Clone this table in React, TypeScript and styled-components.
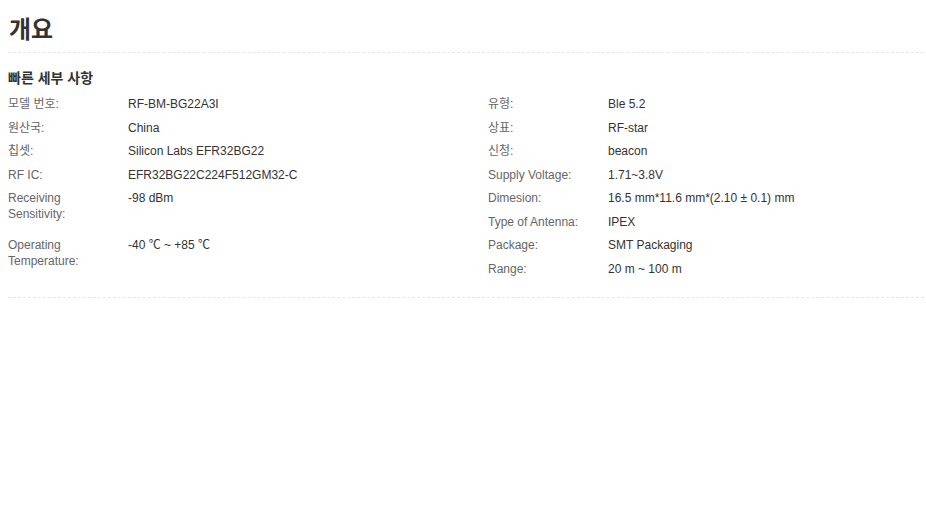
import styled, { createGlobalStyle } from "styled-components";

const GlobalStyle = createGlobalStyle`
  body {
    margin: 0;
    background: #fff;
    font-family: "Liberation Sans", Arial, "Noto Sans CJK KR", sans-serif;
    color: #333;
  }
`;

const left = [
  { label: "모델 번호:", value: "RF-BM-BG22A3I" },
  { label: "원산국:", value: "China" },
  { label: "칩셋:", value: "Silicon Labs EFR32BG22" },
  { label: "RF IC:", value: "EFR32BG22C224F512GM32-C" },
  { label: "Receiving Sensitivity:", value: "-98 dBm", tall: true },
  { label: "Operating Temperature:", value: "-40 ℃ ~ +85 ℃", tall: true },
];

const right = [
  { label: "유형:", value: "Ble 5.2" },
  { label: "상표:", value: "RF-star" },
  { label: "신청:", value: "beacon" },
  { label: "Supply Voltage:", value: "1.71~3.8V" },
  { label: "Dimesion:", value: "16.5 mm*11.6 mm*(2.10 ± 0.1) mm" },
  { label: "Type of Antenna:", value: "IPEX" },
  { label: "Package:", value: "SMT Packaging" },
  { label: "Range:", value: "20 m ~ 100 m" },
];

export default function App() {
  return (
    <>
      <GlobalStyle />
      <Page>
        <Title>개요</Title>
        <Section>
          <SubTitle>빠른 세부 사항</SubTitle>
          <Columns>
            <SpecList>
              {left.map((row) => (
                <Row key={row.label} $tall={row.tall}>
                  <Label>{row.label}</Label>
                  <Value>{row.value}</Value>
                </Row>
              ))}
            </SpecList>
            <SpecList>
              {right.map((row) => (
                <Row key={row.label}>
                  <Label>{row.label}</Label>
                  <Value>{row.value}</Value>
                </Row>
              ))}
            </SpecList>
          </Columns>
        </Section>
      </Page>
    </>
  );
}

const Page = styled.div`
  padding: 0 2px 0 8px;
`;

const Title = styled.h1`
  margin: 0;
  padding: 15px 0 7px 1px;
  font-size: 24px;
  line-height: 30px;
  font-weight: bold;
  color: #333;
  border-bottom: 1px dashed #e6e6e6;
`;

const Section = styled.div`
  padding: 15px 0 17px;
  border-bottom: 1px dashed #e6e6e6;
`;

const SubTitle = styled.h2`
  margin: 0 0 4px;
  font-size: 14px;
  line-height: 20px;
  font-weight: bold;
  color: #333;
`;

const Columns = styled.div`
  display: grid;
  grid-template-columns: 480px 1fr;
`;

const SpecList = styled.div`
  display: flex;
  flex-direction: column;
`;

const Row = styled.div<{ $tall?: boolean }>`
  display: grid;
  grid-template-columns: 120px 1fr;
  font-size: 12px;
  line-height: 16px;
  padding: 4px 0 ${(p) => (p.$tall ? "11px" : "3.5px")};
`;

const Label = styled.span`
  color: #666;
  padding-right: 10px;
`;

const Value = styled.span`
  color: #333;
`;
